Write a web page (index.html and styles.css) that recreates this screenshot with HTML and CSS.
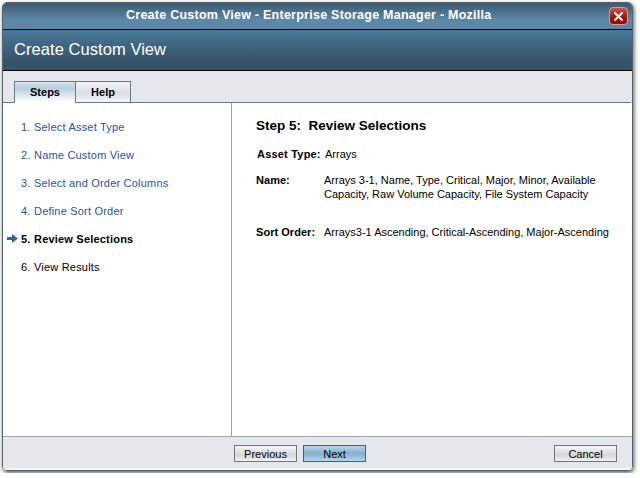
FILE: index.html
```html
<!DOCTYPE html>
<html lang="en">
<head>
<meta charset="utf-8">
<title>Create Custom View</title>
<link rel="stylesheet" href="styles.css">
</head>
<body>
<div class="window">
  <header class="titlebar">
    <span class="title">Create Custom View - Enterprise Storage Manager - Mozilla</span>
    <button class="close" aria-label="Close"><svg width="11" height="11" viewBox="0 0 11 11"><path d="M1.5 1.5 9.5 9.5M9.5 1.5 1.5 9.5" stroke="#fff" stroke-width="2"/></svg></button>
  </header>
  <h1 class="banner">Create Custom View</h1>
  <nav class="tabs">
    <div class="tab active">Steps</div>
    <div class="tab">Help</div>
  </nav>
  <main class="content">
    <ol class="steps">
      <li><span class="num">1.</span><span>Select Asset Type</span></li>
      <li><span class="num">2.</span><span>Name Custom View</span></li>
      <li><span class="num">3.</span><span>Select and Order Columns</span></li>
      <li><span class="num">4.</span><span>Define Sort Order</span></li>
      <li class="current"><svg class="arrow" width="11" height="9" viewBox="0 0 11 9"><path d="M0 3h5V0l6 4.5L5 9V6H0z" fill="#31699c"/></svg><span class="num">5.</span><span>Review Selections</span></li>
      <li class="pending"><span class="num">6.</span><span>View Results</span></li>
    </ol>
    <section class="review">
      <h2>Step 5:&nbsp; Review Selections</h2>
      <dl>
        <div class="row asset"><dt>Asset Type:</dt><dd>Arrays</dd></div>
        <div class="row name"><dt>Name:</dt><dd>Arrays 3-1, Name, Type, Critical, Major, Minor, Available<br>Capacity, Raw Volume Capacity, File System Capacity</dd></div>
        <div class="row sort"><dt>Sort Order:</dt><dd>Arrays3-1 Ascending, Critical-Ascending, Major-Ascending</dd></div>
      </dl>
    </section>
  </main>
  <footer class="footer">
    <button class="btn">Previous</button>
    <button class="btn primary">Next</button>
    <button class="btn cancel">Cancel</button>
  </footer>
</div>
</body>
</html>
```

FILE: styles.css
```css
* { box-sizing: border-box; }
body {
  margin: 0;
  padding: 2px;
  background: #fff;
  color: #000;
  font: 11px/14px "Liberation Sans", Arial, sans-serif;
  overflow: hidden;
}
h1, h2, dl, dd, ol { margin: 0; padding: 0; }
button { font: inherit; color: inherit; padding: 0; }
.window {
  display: flex;
  flex-direction: column;
  width: 631px;
  height: 469px;
  border: 1px solid #566469;
  border-radius: 5px;
  overflow: hidden;
  box-shadow: 1px 2px 4px rgba(0, 0, 0, .65);
}
.titlebar {
  display: flex;
  align-items: flex-start;
  flex: 0 0 27px;
  padding: 5px 4px 0 123px;
  border-bottom: 1px solid #000;
  background: linear-gradient(#3b596f, #5c88a8 65%, #5c88a8);
  color: #fff;
}
.title { font-size: 12.5px; font-weight: bold; letter-spacing: .25px; white-space: nowrap; }
.close {
  display: grid;
  place-items: center;
  width: 19px;
  height: 18px;
  margin: -1px 0 0 auto;
  border: 1px solid #d59a96;
  border-radius: 4px;
  background: linear-gradient(#c45c50, #a11309 60%, #920b05);
}
.banner {
  flex: 0 0 41px;
  padding: 9px 0 0 11px;
  border-bottom: 1px solid #000;
  background: linear-gradient(#49799a, #365469 75%);
  color: #fff;
  font-size: 16.5px;
  font-weight: normal;
  line-height: 20px;
  letter-spacing: .06px;
}
.tabs {
  display: flex;
  flex: 0 0 32px;
  padding: 10px 0 0 11px;
  background: linear-gradient(#667d88, #667d88) left bottom / calc(100% - 1px) 1px no-repeat #e4e7ec;
}
.tab {
  width: 55px;
  height: 22px;
  border: 1px solid #667d88;
  border-left: 0;
  background: linear-gradient(#f3f3f5, #dcdee4 55%, #f3f4f7);
  font-weight: bold;
  text-align: center;
  line-height: 21px;
}
.tab.active {
  width: 62px;
  border-left: 1px solid #667d88;
  border-bottom: 0;
  background: linear-gradient(#d7e5f1, #b9cddf 30%, #fff 95%);
}
.content { display: flex; flex: 1; background: #fff; }
.steps {
  width: 229px;
  border-right: 1px solid #a0a0a2;
  padding: 10px 0 0 18px;
  list-style: none;
  letter-spacing: .2px;
}
.steps li {
  position: relative;
  display: flex;
  height: 28px;
  line-height: 28px;
  color: #2752a8;
}
.num { width: 13px; }
.steps .current { color: #000; font-weight: bold; }
.steps .pending { color: #000; }
.arrow { position: absolute; left: -14px; top: 9px; }
.review { padding: 15px 0 0 24px; white-space: nowrap; }
h2 { font-size: 13.5px; line-height: 16px; }
.row { display: flex; }
dt { width: 68px; font-weight: bold; letter-spacing: .04px; }
.asset { margin-top: 13px; padding-left: 1px; }
.asset dt { letter-spacing: .2px; }
.name { margin-top: 12px; }
.sort { margin-top: 24px; }
.footer {
  display: flex;
  flex: 0 0 34px;
  padding: 8px 15px 0 231px;
  gap: 6px;
  border-top: 1px solid #a0a3a6;
  background: linear-gradient(#f2f4f6, #f2f4f6) bottom / 100% 2px no-repeat #e4e7ec;
}
.btn {
  width: 63px;
  height: 17px;
  border: 1px solid #70787f;
  background: linear-gradient(#f7f7f8, #d4d6dc 60%, #f0f1f3);
  line-height: 14px;
  text-align: center;
}
.primary { border-color: #426078; background: linear-gradient(#b8d5e7, #87b0cc 50%, #b0d6eb); }
.cancel { margin-left: auto; }
```
